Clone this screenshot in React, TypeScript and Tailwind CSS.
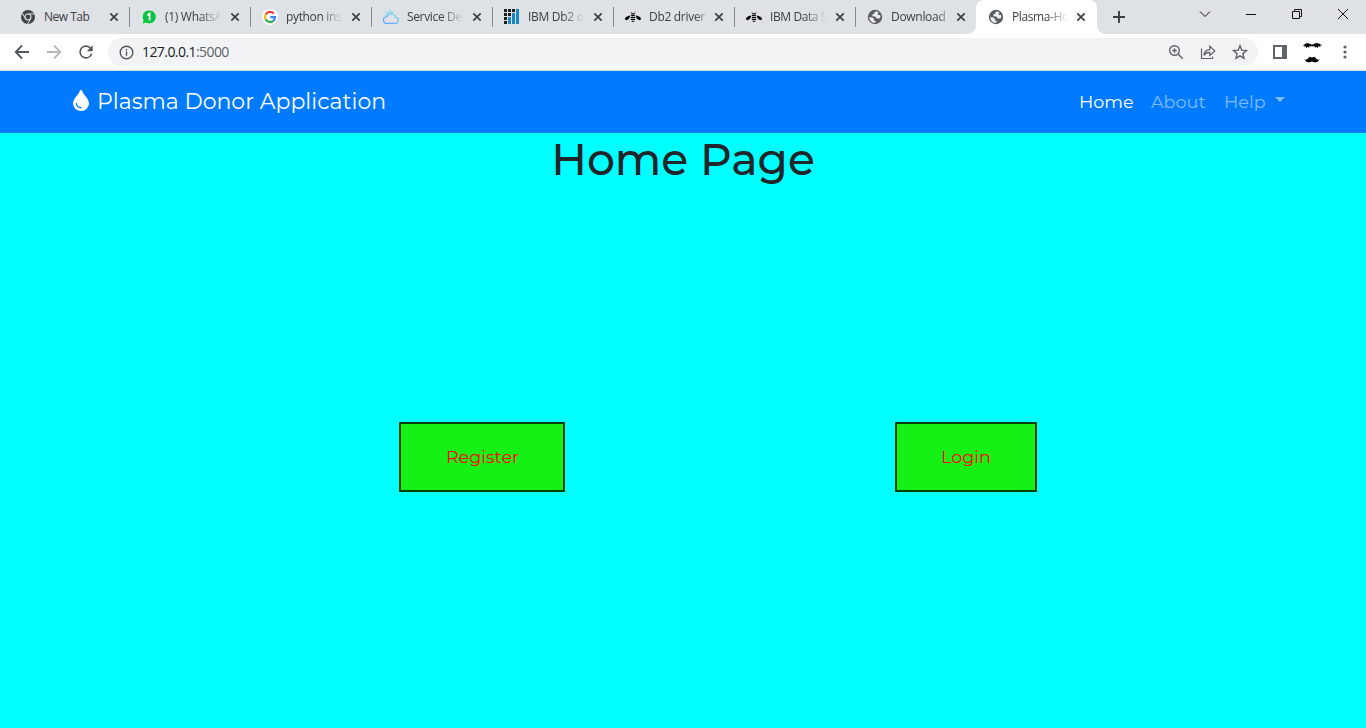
import type { ReactNode } from "react";

function ChromeIcon() {
  return (
    <svg viewBox="0 0 16 16" className="size-4">
      <circle cx="8" cy="8" r="7" fill="#3f4347" />
      <circle cx="8" cy="8" r="3.5" fill="#dee1e6" />
      <circle cx="8" cy="8" r="2.4" fill="#3f4347" />
      <path d="M8 4.9H14.3M5.3 9.5 2.2 4.1M10.7 9.5 7.6 15" stroke="#dee1e6" strokeWidth="1" fill="none" />
    </svg>
  );
}

function WhatsAppIcon() {
  return (
    <svg viewBox="0 0 16 16" className="size-4">
      <path d="M8.2.9a7 7 0 1 1-3.1 13.2L.8 15.3l1.3-4A7 7 0 0 1 8.200.9Z" fill="#0cc143" stroke="#f4fff6" strokeWidth=".8" />
      <path d="M6.300 6.300 8.600 4.700V11.500" stroke="#fff" strokeWidth="1.700" fill="none" />
    </svg>
  );
}

function GoogleIcon() {
  return (
    <svg viewBox="0 0 16 16" className="size-4">
      <circle cx="8" cy="8" r="8" fill="#fff" />
      <g fill="none" strokeWidth="2.300">
        <path d="M11.900 4.600A5 5 0 0 0 3.700 5.500" stroke="#ea4335" />
        <path d="M3.700 5.500a5 5 0 0 0 0 5" stroke="#fbbc05" />
        <path d="M3.700 10.500a5 5 0 0 0 7.600 1.300" stroke="#34a853" />
        <path d="M11.300 11.800A5 5 0 0 0 13 8.100H8.200" stroke="#4285f4" />
      </g>
    </svg>
  );
}

function CloudIcon() {
  return (
    <svg viewBox="0 0 16 16" className="size-4" fill="none">
      <defs>
        <linearGradient id="cloud" x1="0" y1="1" x2="1" y2="0">
          <stop offset="0" stopColor="#5b9dff" />
          <stop offset="1" stopColor="#7adfe8" />
        </linearGradient>
      </defs>
      <path d="M3.800 14.300h8.400a3 3 0 0 0 .3-6 4.600 4.600 0 0 0-8.700-.6 3.300 3.300 0 0 0 0 6.600Z" stroke="url(#cloud)" strokeWidth="1.200" />
      <path d="M3.400 6.500a3.700 3.700 0 0 1 6.200-2.600M6.700 2.300V.8M3.300 3.500 2.200 2.400M10 3.200l1.100-1.100M1.800 6.600H.5" stroke="#6ed3ea" strokeWidth="1" />
    </svg>
  );
}

function Db2Icon() {
  return (
    <svg viewBox="0 0 15 15" className="mr-px mb-px size-[15px]" shapeRendering="crispEdges">
      <path d="M0 0h3v3H0zM4 0h3v3H4zM8 0h3v3H8zM0 4h3v3H0zM4 4h3v3H4zM0 8h3v3H0zM0 12h3v3H0z" fill="#1d1d1d" />
      <path d="M12 0h3v15h-3zM8 4h3v11H8zM4 8h3v7H4z" fill="#1b87c2" />
    </svg>
  );
}

function BeeIcon() {
  return (
    <svg viewBox="0 0 16 16" className="size-4" fill="#050505">
      <path d="M5.400 6.500C3.400 6.700 1.300 7.700.2 9c-.6 1.500.3 2.300 1.800 2.100 1.600-.3 2.500-2 3.400-4.600ZM10.600 6.500c2 .2 4.100 1.200 5.200 2.500.6 1.500-.3 2.300-1.800 2.100-1.600-.3-2.500-2-3.400-4.600Z" />
      <path d="M6.300 4.200h3.400v1.200H6.300zM6.100 6.100h3.800v1.200H6.100zM5.800 8h4.400v1.200H5.800zM5.800 9.900h4.400v1.200H5.800zM6.600 11.800h2.800v1H6.600z" />
      <path d="M6.800 4.300 5.700 3.200M9.200 4.300l1.100-1.100" stroke="#050505" strokeWidth=".8" />
    </svg>
  );
}

function GlobeIcon() {
  return (
    <svg viewBox="0 0 16 16" className="size-4">
      <circle cx="8" cy="8" r="7.200" fill="#5b5f64" />
      <path d="M9.500 2.300 7.200 3.600 7.400 4.800 5.600 5.200 5.400 7.200l3 .4 1.300 1.800 2.700.2 1-1.600-.2-1.700-2-.3-.7-1.200 1.200-1ZM2.300 7.900l2.900.7 1.900 1.500-.2 1.300 1.800.6-.3 1.700c-3.400.3-6.200-2.300-6.100-5.800Z" fill="#eceef0" />
    </svg>
  );
}

function CloseIcon() {
  return (
    <svg viewBox="0 0 10 10" className="size-[10px] shrink-0">
      <path d="m1.300 1.300 7.400 7.400m0-7.400L1.300 8.700" stroke="#3c4043" strokeWidth="1.700" />
    </svg>
  );
}

const fade = "[mask-image:linear-gradient(to_right,#000_60%,transparent_97%)]";
const shortFade = "[mask-image:linear-gradient(to_right,#000_80%,transparent_105%)]";

const tabs: { title: string; icon: ReactNode; style: string }[] = [
  { title: "New Tab", icon: <ChromeIcon />, style: "tracking-[-0.5px]" },
  { title: "(1) WhatsA", icon: <WhatsAppIcon />, style: `tracking-[-0.3px] ${fade}` },
  { title: "python inst", icon: <GoogleIcon />, style: `tracking-[-0.35px] ${fade}` },
  { title: "Service De", icon: <CloudIcon />, style: `tracking-[-0.35px] ${fade}` },
  { title: "IBM Db2 o", icon: <Db2Icon />, style: `tracking-[-0.3px] ${fade}` },
  { title: "Db2 driver", icon: <BeeIcon />, style: `tracking-[-0.3px] ${shortFade}` },
  { title: "IBM Data S", icon: <BeeIcon />, style: `tracking-[-0.4px] ${fade}` },
  { title: "Download", icon: <GlobeIcon />, style: `tracking-[-0.3px] ${shortFade}` },
  { title: "Plasma-Ho", icon: <GlobeIcon />, style: `tracking-[-0.4px] ${fade}` },
];

function TabStrip() {
  return (
    <header className="flex h-[34px] bg-[#dee1e6] pl-2">
      {tabs.map((tab, i) => {
        const active = i === tabs.length - 1;
        return (
          <div
            key={tab.title}
            className={`relative flex h-[34px] w-[121px] shrink-0 items-center pl-3 ${active ? "rounded-t-lg bg-white" : ""}`}
          >
            {active && (
              <>
                <i className="absolute bottom-0 -left-2 size-2 bg-[radial-gradient(circle_at_0_0,#dee1e6_7.5px,#fff_8px)]" />
                <i className="absolute -right-2 bottom-0 size-2 bg-[radial-gradient(circle_at_100%_0,#dee1e6_7.5px,#fff_8px)]" />
              </>
            )}
            {tab.icon}
            <span className={`ml-2 w-[58px] shrink-0 text-xs whitespace-nowrap text-[#3c4043] ${tab.style}`}>{tab.title}</span>
            <span className={active ? "ml-1.5 flex" : "ml-[7px] flex"}>
              <CloseIcon />
            </span>
            {i < 7 && <i className="absolute top-[7px] right-[-1px] h-5 w-px bg-[#85888d]" />}
          </div>
        );
      })}
      <svg viewBox="0 0 14 14" className="mt-[10px] ml-[15px] size-[14px]">
        <path d="M7 1v12M1 7h12" stroke="#3c4043" strokeWidth="1.900" />
      </svg>
      <div className="ml-auto flex h-[28px] items-center text-[#111]">
        <svg viewBox="0 0 12 12" className="mr-[34px] size-3" fill="none" stroke="currentColor">
          <path d="m1 3.500 5 5 5-5" />
        </svg>
        <svg viewBox="0 0 12 12" className="mr-[34px] size-3" fill="none" stroke="currentColor">
          <path d="M1 6.500h10" shapeRendering="crispEdges" />
        </svg>
        <svg viewBox="0 0 12 12" className="mr-[34px] size-3" fill="none" stroke="currentColor">
          <path d="M1.500 3.500h7v7h-7zM3.500 3V1.500h7v7H9" />
        </svg>
        <svg viewBox="0 0 12 12" className="mr-[17px] size-3" fill="none" stroke="currentColor">
          <path d="m1 1 10 10M11 1 1 11" />
        </svg>
      </div>
    </header>
  );
}

function Toolbar() {
  return (
    <div className="flex h-[37px] items-center border-b border-[#dadce0] bg-white pl-[14px]">
      <svg viewBox="0 0 16 16" className="size-4" fill="none" stroke="#53575b" strokeWidth="1.800">
        <path d="M15 8H2M8 1.500 1.700 8 8 14.500" />
      </svg>
      <svg viewBox="0 0 16 16" className="ml-4 size-4" fill="none" stroke="#b5b7ba" strokeWidth="1.800">
        <path d="M1 8h13M8 1.500 14.300 8 8 14.500" />
      </svg>
      <svg viewBox="0 0 24 24" className="ml-[14px] size-5" fill="#53575b">
        <path d="M17.650 6.350A7.960 7.960 0 0 0 12 4a8 8 0 1 0 7.730 10h-2.080A6 6 0 1 1 12 6c1.660 0 3.140.69 4.220 1.780L13 11h7V4z" />
      </svg>
      <div className="ml-3 flex h-7 w-[1150px] items-center rounded-full bg-[#f1f3f4] pr-[10px] pl-[11px]">
        <svg viewBox="0 0 16 16" className="size-[15px]" fill="none" stroke="#53575b" strokeWidth="1.500">
          <circle cx="8" cy="8" r="6.700" />
          <path d="M8 7v4.500M8 4.200v1.700" />
        </svg>
        <span className="mb-px ml-2 text-[14px] tracking-[-0.570px] whitespace-nowrap text-[#202124]">
          127.0.0.1<span className="text-[#5f6368]">:5000</span>
        </span>
        <svg viewBox="0 0 16 16" className="ml-auto size-4" fill="none" stroke="#5f6368" strokeWidth="1.400">
          <circle cx="6.500" cy="6.500" r="4.800" />
          <path d="m10 10 4.800 4.800M4.300 6.500h4.400M6.500 4.300v4.400" />
        </svg>
        <svg viewBox="0 0 16 16" className="ml-4 size-4" fill="none" stroke="#5f6368" strokeWidth="1.200">
          <path d="M1.500 4.500v10h11V12.500M3.800 11.300c.5-3.700 2.500-5.500 6-5.700V2.200l5 4.700-5 4.500V8.300c-2.600 0-4.500.8-6 3Z" />
        </svg>
        <svg viewBox="0 0 16 16" className="ml-4 size-4" fill="none" stroke="#5f6368" strokeWidth="1.400">
          <path d="m8 1.800 1.800 4.300 4.700.4-3.600 3.100 1.100 4.600L8 11.800l-4 2.400 1.100-4.600-3.600-3.100 4.700-.4Z" />
        </svg>
      </div>
      <svg viewBox="0 0 14 14" className="ml-[15px] h-[14px] w-[14px]">
        <path d="M0 0h14v14H0zM2 2v10h7V2z" fill="#5f6368" fillRule="evenodd" />
      </svg>
      <svg viewBox="0 0 20 22" className="ml-[15px] h-[22px] w-5" fill="#050505">
        <path d="m.5 4.500 2-1.300L5 2l3 .8 1.300.8h1.400L12 2.800l3-.8 3 1 2 1.500-2-.1.600 1.500-2.200-.6-.6 2-1.200-1.500-1.500 1-.8-1.800-1.800.5-.5-.7-.7.700-1.600-.5-.7 1.800-1.400-1-1.300 1.500-.4-1.800-1.500.8.300-1.800Z" />
        <path d="M2.500 18.700 5 18.500l2.500-2.800 2.500.8 2.500-.8 2.500 2.800 2.500.2-2 2-2.800.8-2.700-1-2.700 1-2.800-.8Z" />
      </svg>
      <svg viewBox="0 0 4 14" className="ml-[21px] h-[14px] w-1" fill="#5f6368">
        <circle cx="2" cy="2" r="1.600" />
        <circle cx="2" cy="7" r="1.600" />
        <circle cx="2" cy="12" r="1.600" />
      </svg>
    </div>
  );
}

function NavBar() {
  return (
    <nav className="flex h-[62px] items-center bg-[#007bff] pr-[81px] pb-0.5 pl-[73px] font-['Montserrat','Inter',sans-serif]">
      <svg viewBox="0 0 16 22" className="mb-px h-[21px] w-4" preserveAspectRatio="none">
        <path d="M8 0c.7 0 1 .5 1.200 1C10.500 5 16 9.500 16 14a8 8 0 0 1-16 0C0 9.500 5.500 5 6.800 1 7 .5 7.300 0 8 0Z" fill="#fff" />
        <path d="M3.300 14a4.700 4.700 0 0 0 4.900 4.500" fill="none" stroke="#007bff" strokeWidth="1.200" strokeLinecap="round" />
      </svg>
      <a className="ml-2 text-[22px] whitespace-nowrap text-white">Plasma Donor Application</a>
      <div className="ml-auto flex items-center pt-0.5 text-[17.600px] whitespace-nowrap text-white/50">
        <a className="w-[72px] text-white">Home</a>
        <a className="w-[73px]">About</a>
        <a className="w-[51px]">Help</a>
        <i className="mb-1 size-0 border-x-[5.300px] border-t-[5.300px] border-x-transparent border-t-white/50" />
      </div>
    </nav>
  );
}

export default function App() {
  return (
    <div className="flex h-[728px] w-[1366px] flex-col overflow-hidden bg-[#00ffff] font-['Segoe_UI','Open_Sans',sans-serif]">
      <TabStrip />
      <Toolbar />
      <NavBar />
      <main className="flex flex-1 flex-col font-['Montserrat','Inter',sans-serif]">
        <h1 className="h-[53px] text-center text-[44px] leading-[53px] font-medium text-[#212529]">Home Page</h1>
        <div className="mt-[236px] flex pl-[399px]">
          <button className="h-[70px] w-[166px] border-2 border-[#063f06] bg-[#15f015] pt-px pl-px text-[17.600px] text-[#ff0000]">Register</button>
          <button className="ml-[330px] h-[70px] w-[142px] border-2 border-[#063f06] bg-[#15f015] pt-px text-[17.600px] text-[#ff0000]">Login</button>
        </div>
      </main>
    </div>
  );
}
